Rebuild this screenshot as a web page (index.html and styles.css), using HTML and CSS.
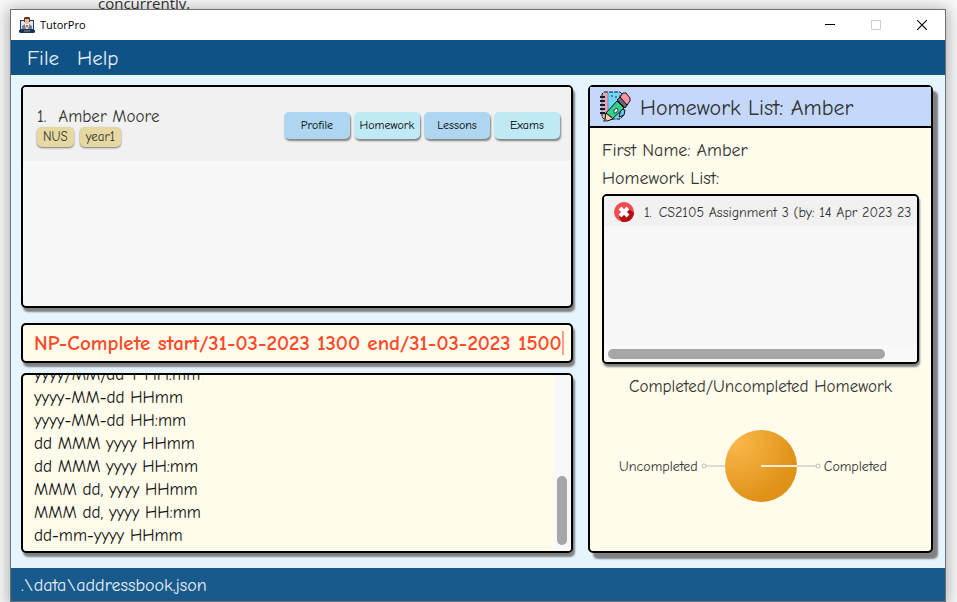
FILE: index.html
```html
<!DOCTYPE html>
<html lang="en">
<head>
<meta charset="utf-8">
<title>TutorPro</title>
<link rel="stylesheet" href="styles.css">
</head>
<body>
<p class="backdrop">concurrently.</p>
<div class="window">
  <header class="titlebar">
    <svg class="app-icon" viewBox="0 0 16 16" aria-hidden="true">
      <path d="M1 3h14v10H1z" fill="#263b59"/>
      <path d="M2 4h12v8H2z" fill="#dbe7f0"/>
      <path d="M5 1l1-1h4l1 1v4H5z" fill="#5b3425"/>
      <path d="M6 2h4v4L9 7H7L6 6z" fill="#f0b995"/>
      <path d="M3 12V9l3-2h4l3 2v3z" fill="#77808c"/>
      <path d="M6 7h4l-1 5H7z" fill="#fff"/>
      <path d="M7 8h2l-1 4z" fill="#b84843"/>
      <path d="M0 13h16v2l-1 1H1l-1-1z" fill="#1c3150"/>
      <path d="M5 14h6" stroke="#7890aa"/>
    </svg>
    <h1 class="app-name">TutorPro</h1>
    <div class="window-controls">
      <button class="control" type="button" aria-label="Minimize"><svg viewBox="0 0 10 10"><path d="M0 4.500h10" stroke="#000"/></svg></button>
      <button class="control" type="button" aria-label="Maximize" disabled><svg viewBox="0 0 10 10"><path d="M.5.5h9v9h-9z" fill="none" stroke="#ccc"/></svg></button>
      <button class="control" type="button" aria-label="Close"><svg viewBox="0 0 10 10"><path d="M0 0l10 10M10 0L0 10" stroke="#000" stroke-width="1.100"/></svg></button>
    </div>
  </header>
  <nav class="menubar">
    <button class="menu" type="button">File</button>
    <button class="menu" type="button">Help</button>
  </nav>
  <main class="workspace">
    <div class="left">
      <section class="panel people">
        <article class="person">
          <div class="person-info">
            <h2 class="person-name"><span>1.</span><span>Amber Moore</span></h2>
            <div class="tags"><span class="tag">NUS</span><span class="tag">year1</span></div>
          </div>
          <div class="actions">
            <button class="action" type="button">Profile</button>
            <button class="action" type="button">Homework</button>
            <button class="action" type="button">Lessons</button>
            <button class="action" type="button">Exams</button>
          </div>
        </article>
      </section>
      <div class="panel command">
        <input class="command-input" type="text" aria-label="Command" value="NP-Complete start/31-03-2023 1300 end/31-03-2023 1500">
        <span class="caret"></span>
      </div>
      <section class="panel result">
        <div class="result-text">
          <div>yyyy/MM/dd T HH:mm</div>
          <div>yyyy-MM-dd HHmm</div>
          <div>yyyy-MM-dd HH:mm</div>
          <div>dd MMM yyyy HHmm</div>
          <div>dd MMM yyyy HH:mm</div>
          <div>MMM dd, yyyy HHmm</div>
          <div>MMM dd, yyyy HH:mm</div>
          <div>dd-mm-yyyy HHmm</div>
        </div>
        <div class="track"><div class="thumb"></div></div>
      </section>
    </div>
    <section class="panel detail">
      <header class="detail-head">
        <svg class="book-icon" viewBox="0 0 32 32" aria-hidden="true">
          <path d="M5 1h16l3 3v21l-3 3H5l-2-2V3z" fill="#70d7f7" stroke="#111" stroke-dasharray="4 1"/>
          <path d="M4 2h5v25H4z" fill="#ff9dad"/>
          <path d="M9 2v25" stroke="#4a9ad0"/>
          <path d="M1 6h5M1 10h5M1 14h5M1 18h5M1 22h5" stroke="#181a26" stroke-width="2"/>
          <path d="M2 8h4M2 12h4M2 16h4M2 20h4" stroke="#bfc6dd"/>
          <path d="M12 5h2M16 6h2M20 5h2" stroke="#17324a"/>
          <path d="M22 18l4 1-1 5-5 2z" fill="#70c9f4" stroke="#111"/>
          <path d="M18 10l7 7-12 11-7-5z" fill="#36ce8e" stroke="#111"/>
          <path d="M9 23l4 3" stroke="#16966b"/>
          <path d="M18 9l3-3 8 7-3 4z" fill="#68667d" stroke="#111"/>
          <path d="M21 6l3-4h3l4 5v3l-3 4z" fill="#ff91a3" stroke="#111"/>
          <path d="M7 22l7 6-6 2-2-2z" fill="#ffd6a0" stroke="#111"/>
          <path d="M6 27l3 3-4 1-1-1z" fill="#555468"/>
          <path d="M15 19l3-2 1 2-2 3h-2z" fill="#fff" stroke="#0d5942"/>
        </svg>
        <h2 class="detail-title">Homework List: Amber</h2>
      </header>
      <div class="detail-body">
        <p class="field">First Name: Amber</p>
        <p class="field">Homework List:</p>
        <div class="panel homework">
          <div class="homework-item">
            <svg class="status" viewBox="0 0 20 20" role="img" aria-label="Not completed">
              <circle cx="10" cy="10" r="10" fill="#f24c4c"/>
              <path d="M14 6l6 5a10 10 0 0 1-12 9l-3-5z" fill="#b50d13"/>
              <path d="M6 6l8 8M14 6l-8 8" stroke="#fff" stroke-width="4"/>
            </svg>
            <span>1.</span><span>CS2105 Assignment 3 (by: 14 Apr 2023 23</span>
          </div>
          <div class="h-track"><div class="h-thumb"></div></div>
        </div>
        <h3 class="chart-title">Completed/Uncompleted Homework</h3>
        <div class="chart">
          <span class="chart-label">Uncompleted</span>
          <svg class="pie" viewBox="0 0 120 74" aria-hidden="true">
            <defs><radialGradient id="slice" cx="0.150" cy="0.150" r="0.850"><stop offset="0" stop-color="#fbb84c"/><stop offset="1" stop-color="#e09218"/></radialGradient></defs>
            <circle cx="60" cy="37" r="36" fill="url(#slice)"/>
            <path d="M60 37h36" stroke="#f8ead0" stroke-width="2"/>
            <path d="M5 37h19M96 37h19" stroke="#bcbcb6"/>
            <circle cx="3" cy="37" r="2" fill="none" stroke="#bcbcb6"/>
            <circle cx="117" cy="37" r="2" fill="none" stroke="#bcbcb6"/>
          </svg>
          <span class="chart-label">Completed</span>
        </div>
      </div>
    </section>
  </main>
  <footer class="statusbar">.\data\addressbook.json</footer>
</div>
</body>
</html>
```
FILE: styles.css
```css
* { box-sizing: border-box; }
body {
  margin: 0;
  height: 100vh;
  padding: 9px 11px 0 10px;
  overflow: hidden;
  background: #f8f8f8;
  color: #333;
  font-family: "Comic Neue", "Open Sans", sans-serif;
}
h1, h2, h3, p { margin: 0; font-weight: 400; }
button { border: 0; padding: 0; font-family: inherit; color: inherit; background: none; }

.backdrop {
  position: absolute;
  top: -7px;
  left: 98px;
  font: 15px/20px "Open Sans", sans-serif;
}
.window {
  position: relative;
  display: flex;
  flex-direction: column;
  height: 100%;
  border: 1px solid #707070;
  background: #e6f4fe;
  box-shadow: 0 2px 14px 2px rgba(0, 0, 0, 0.3);
}

.titlebar { display: flex; align-items: center; height: 30px; padding-left: 8px; background: #fff; }
.app-icon { width: 16px; height: 16px; }
.app-name { margin-left: 5px; font: 11px/16px "Open Sans", sans-serif; color: #000; }
.window-controls { display: flex; margin-left: auto; }
.control { display: grid; place-items: center; width: 46px; height: 30px; }
.control svg { width: 10px; height: 10px; }

.menubar { display: flex; gap: 18px; height: 35px; padding: 0 16px; background: #0f5286; }
.menu { font-size: 21px; color: #e6eef6; }

.workspace {
  flex: 1;
  min-height: 0;
  display: grid;
  grid-template-columns: 552fr 345fr;
  gap: 15px;
  padding: 10px 12px 15px 10px;
}
.left { display: flex; flex-direction: column; min-width: 0; min-height: 0; }
.panel {
  border: 2px solid #000;
  border-radius: 5px;
  background: #fffceb;
  box-shadow: 2px 4px 2px #808080;
}

.people { flex: 223; overflow: hidden; background: #f7f7f7; }
.person {
  display: flex;
  align-items: center;
  justify-content: space-between;
  height: 74px;
  padding: 2px 11px 0 14px;
  background: #f1f1f1;
}
.person-info { padding-top: 4px; }
.person-name { display: flex; gap: 12px; font-size: 17px; line-height: 20px; }
.tags { display: flex; gap: 6px; }
.tag {
  padding: 0 6px;
  border-radius: 5px;
  background: #e5d8a0;
  box-shadow: 0 1px 2px #777;
  font-size: 13px;
  line-height: 20px;
}
.actions { display: flex; gap: 4px; }
.action {
  width: 66px;
  height: 27px;
  border-radius: 5px;
  background: #aed6f1;
  box-shadow: 1px 2px 2px #808080;
  font-size: 12px;
  color: #000;
}
.action:nth-child(even) { background: #bee9f5; }

.command {
  display: flex;
  align-items: center;
  height: 40px;
  margin: 15px 0 10px;
  padding: 0 7px 0 11px;
}
.command-input {
  flex: 1;
  min-width: 0;
  height: 32px;
  padding: 0;
  border: 0;
  outline: 0;
  background: none;
  color: #ff4a2a;
  font: 700 21px "Comic Neue", "Open Sans", sans-serif;
}
.caret { width: 2px; height: 24px; background: #fda08a; }

.result { display: flex; flex: 180; min-height: 0; overflow: hidden; }
.result-text {
  flex: 1;
  display: flex;
  flex-direction: column;
  justify-content: flex-end;
  overflow: hidden;
  padding: 0 0 4px 11px;
  color: #111;
  font-size: 17px;
  line-height: 23px;
}
.track {
  display: flex;
  flex-direction: column;
  justify-content: flex-end;
  width: 17px;
  padding: 0 4px 6px 3px;
  background: #f8f8f8;
}
.thumb { height: 69px; border-radius: 5px; background: #a6a6a6; }

.detail { display: flex; flex-direction: column; min-width: 0; box-shadow: 5px 6px 2px #808080; }
.detail-head {
  display: flex;
  align-items: center;
  gap: 9px;
  height: 41px;
  padding-left: 9px;
  border-bottom: 2px solid #000;
  background: #c4d8fb;
}
.book-icon { width: 32px; height: 32px; }
.detail-title { padding-top: 3px; font-size: 22px; }
.detail-body { padding: 9px 12px; }
.field { font-size: 18px; line-height: 28px; }
.homework {
  display: flex;
  flex-direction: column;
  justify-content: space-between;
  height: 170px;
  margin-top: 1px;
  overflow: hidden;
  background: #f7f7f7;
  box-shadow: 1px 3px 2px #808080;
}
.homework-item {
  display: flex;
  align-items: center;
  gap: 7px;
  height: 30px;
  padding: 2px 0 0 10px;
  overflow: hidden;
  background: #f1f1f1;
  font-size: 14px;
  white-space: nowrap;
}
.status { flex: none; width: 20px; height: 20px; margin-right: 3px; }
.h-track { padding: 3px 32px 3px 4px; background: #f9f9f9; }
.h-thumb { height: 10px; border-radius: 5px; background: #a6a6a6; }
.chart-title { margin-top: 11px; text-align: center; font-size: 17px; line-height: 24px; }
.chart { display: flex; align-items: center; justify-content: center; gap: 3px; margin-top: 30px; padding-right: 15px; }
.chart-label { font-size: 14px; }
.pie { flex: none; width: 120px; height: 74px; }

.statusbar { height: 33px; padding-left: 10px; background: #195a8d; color: #e6eef6; font-size: 18px; line-height: 36px; }
```
